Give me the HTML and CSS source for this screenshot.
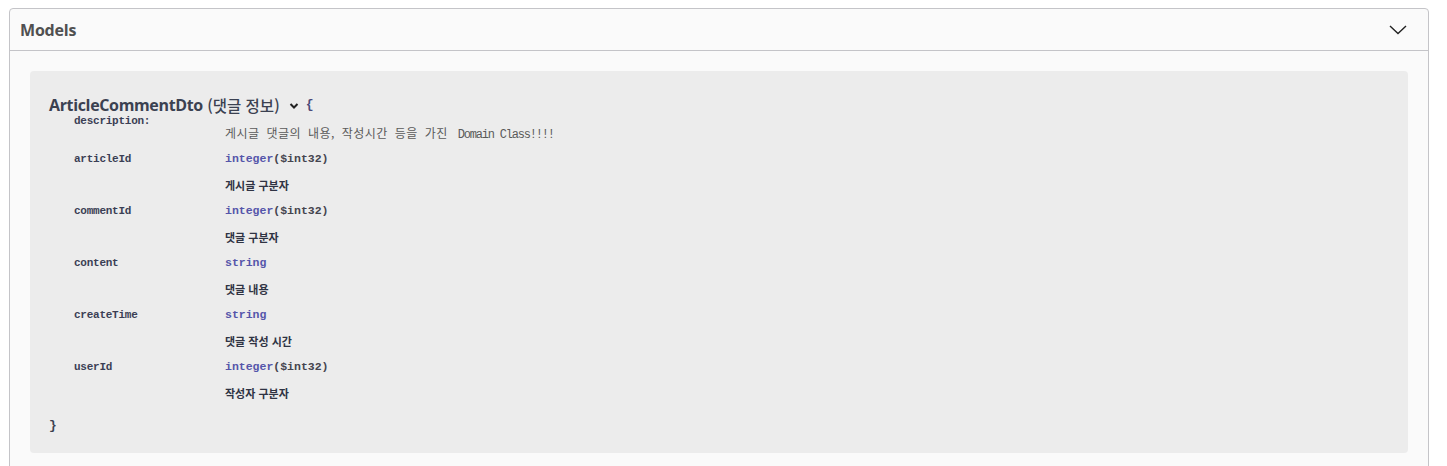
FILE: index.html
```html
<!DOCTYPE html>
<html lang="ko">
<head>
<meta charset="utf-8">
<link rel="stylesheet" href="styles.css">
</head>
<body>
<section class="models">
  <div class="models-head">
    <h4 class="models-title">Models</h4>
    <svg class="head-arrow" width="20" height="20" viewBox="0 0 20 20"><path d="M2 6 L10 13.5 L18 6" fill="none" stroke="#222" stroke-width="1.4"/></svg>
  </div>
  <div class="models-body">
    <div class="model-box">
      <div class="model-title">
        <span class="model-name">ArticleCommentDto</span><span class="model-ko"> (댓글 정보)</span>
        <svg class="title-arrow" width="10" height="10" viewBox="0 0 10 10"><path d="M1.5 3 L5 6.5 L8.5 3" fill="none" stroke="#222" stroke-width="2"/></svg>
        <span class="brace">{</span>
      </div>
      <div class="props">
        <div class="prop-row desc-row">
          <div class="key key-desc">description:</div>
          <div class="val desc-val"><span class="ko-light">게시글 댓글의 내용, 작성시간 등을 가진</span> <span class="latin-light">Domain Class!!!!</span></div>
        </div>
        <div class="prop-row">
          <div class="key">articleId</div>
          <div class="val"><span class="ptype">integer</span><span class="pformat">($int32)</span></div>
        </div>
        <div class="prop-row">
          <div class="key"></div>
          <div class="val pdesc"><span class="ko">게시글 구분자</span></div>
        </div>
        <div class="prop-row">
          <div class="key">commentId</div>
          <div class="val"><span class="ptype">integer</span><span class="pformat">($int32)</span></div>
        </div>
        <div class="prop-row">
          <div class="key"></div>
          <div class="val pdesc"><span class="ko">댓글 구분자</span></div>
        </div>
        <div class="prop-row">
          <div class="key">content</div>
          <div class="val"><span class="ptype">string</span></div>
        </div>
        <div class="prop-row">
          <div class="key"></div>
          <div class="val pdesc"><span class="ko">댓글 내용</span></div>
        </div>
        <div class="prop-row">
          <div class="key">createTime</div>
          <div class="val"><span class="ptype">string</span></div>
        </div>
        <div class="prop-row">
          <div class="key"></div>
          <div class="val pdesc"><span class="ko">댓글 작성 시간</span></div>
        </div>
        <div class="prop-row">
          <div class="key">userId</div>
          <div class="val"><span class="ptype">integer</span><span class="pformat">($int32)</span></div>
        </div>
        <div class="prop-row">
          <div class="key"></div>
          <div class="val pdesc"><span class="ko">작성자 구분자</span></div>
        </div>
      </div>
      <div class="close-brace">}</div>
    </div>
  </div>
</section>
</body>
</html>
```
FILE: styles.css
```css
html, body {
  margin: 0;
  padding: 0;
  background: #ffffff;
}
html {
  height: 466px;
  overflow: hidden;
}
body {
  padding: 8px 0 0 9px;
}
.models {
  width: 1420px;
  height: 470px;
  border: 1px solid #c4c4c8;
  border-radius: 4px;
  background: #fafafa;
  box-sizing: border-box;
  overflow: hidden;
}
.models-head {
  height: 42px;
  box-sizing: border-box;
  border-bottom: 1px solid #c4c4c8;
  display: flex;
  align-items: center;
  justify-content: space-between;
  padding: 0 20px 0 10px;
}
.models-title {
  margin: 0;
  font-family: "Open Sans", "Noto Sans", sans-serif;
  font-weight: 700;
  font-size: 16px;
  color: #505050;
  letter-spacing: -0.2px;
}
.head-arrow {
  display: block;
  margin-top: 1px;
}
.models-body {
  padding: 20px 20px 20px 20px;
}
.model-box {
  background: #ececec;
  border-radius: 4px;
  padding: 25px 20px 14px 19px;
  height: 343px;
  box-sizing: content-box;
}
.model-title {
  display: flex;
  align-items: center;
  height: 18px;
  line-height: 18px;
  font-family: "Open Sans", "Noto Sans CJK KR", sans-serif;
  color: #3b4151;
}
.model-name {
  font-weight: 700;
  font-size: 16px;
  letter-spacing: -0.35px;
}
.model-ko {
  font-family: "Noto Sans CJK KR", sans-serif;
  font-weight: 500;
  font-size: 15.5px;
  white-space: pre;
}
.title-arrow {
  margin: 1px 0 0 9px;
}
.brace {
  margin-left: 7px;
  font-family: "Liberation Mono", monospace;
  font-weight: 700;
  font-size: 13px;
  color: #4b4a7a;
}
.props {
  padding-left: 25px;
  font-family: "Liberation Mono", "Noto Sans CJK KR", monospace;
  font-size: 11.5px;
  color: #3b4151;
}
.prop-row {
  display: flex;
  height: 26px;
  line-height: 26px;
}
.key {
  width: 151px;
  flex: none;
  font-weight: 700;
  font-size: 11px;
  letter-spacing: -0.25px;
  color: #3b3f55;
}
.val {
  white-space: nowrap;
}
.desc-row {
  height: 32px;
}
.key-desc {
  line-height: 14px;
}
.desc-val {
  padding-top: 6px;
  color: #5a5a5a;
  word-spacing: 3px;
}
.ko-light {
  font-family: "Noto Sans CJK KR", sans-serif;
  font-weight: 400;
  font-size: 12px;
  letter-spacing: 0.5px;
}
.latin-light {
  font-family: "Liberation Mono", monospace;
  font-size: 12px;
  letter-spacing: -1.2px;
  word-spacing: 0;
}
.ptype {
  color: #5555aa;
  font-weight: 700;
}
.pformat {
  color: #45454f;
  font-weight: 700;
}
.pdesc {
  font-weight: 700;
}
.ko {
  font-family: "Noto Sans CJK KR", sans-serif;
  font-size: 11px;
  color: #2f3343;
}
.close-brace {
  margin-top: 7px;
  line-height: 26px;
  font-family: "Liberation Mono", monospace;
  font-weight: 700;
  font-size: 13px;
  color: #3b4151;
}
```
